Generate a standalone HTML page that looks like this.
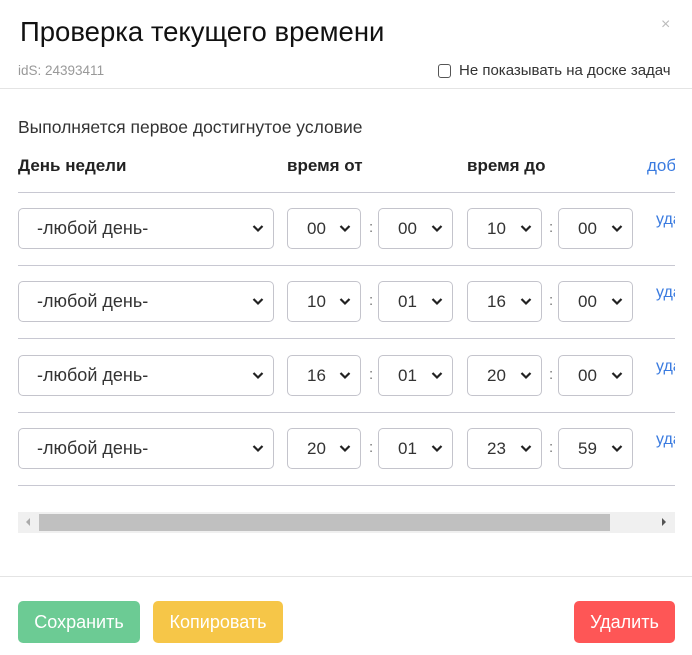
<!DOCTYPE html>
<html><head><meta charset="utf-8"><style>
*{box-sizing:border-box;margin:0;padding:0}
body{width:692px;height:655px;background:#fff;font-family:"Liberation Sans",sans-serif;position:relative;overflow:hidden;color:#222}
.a{position:absolute}
.sel{position:absolute;height:41px;border:1px solid #c4c4cc;border-radius:5px;background:#fff;font-size:17px;color:#333;line-height:39px}
.sel svg{position:absolute;right:9px;top:15px}
.line{position:absolute;left:18px;width:657px;height:1px;background:#c8c8d2}
.btn{position:absolute;top:601px;height:42px;border-radius:5px;color:#fff;font-size:18px;line-height:42px;text-align:center}
.colon{position:absolute;font-size:15px;color:#777}
.clip{position:absolute;left:0;top:0;width:675px;height:655px;overflow:hidden}
.ud{position:absolute;left:656px;color:#3a7be0;font-size:16px}
</style></head><body>
<div class="a" style="left:20px;top:16px;font-size:27.5px;color:#111;white-space:nowrap">Проверка текущего времени</div>
<div class="a" style="left:661px;top:16px;font-size:16px;color:#bbb">×</div>
<div class="a" style="left:18px;top:63px;font-size:13.5px;color:#999">idS: 24393411</div>
<div class="a" style="left:438px;top:64px;width:13px;height:14px;border:1.5px solid #555;border-radius:3px"></div>
<div class="clip"><div class="a" style="left:459px;top:62px;font-size:15px;color:#333;white-space:nowrap">Не показывать на доске задач</div>
<div class="a" style="left:647px;top:156px;font-size:17px;color:#3a7be0;white-space:nowrap">добавить</div>
<div id="uds"></div></div>
<div class="a" style="left:0;top:88px;width:692px;height:1px;background:#e4e4e4"></div>
<div class="a" style="left:18px;top:117px;font-size:17.5px;color:#333;white-space:nowrap">Выполняется первое достигнутое условие</div>
<div class="a" style="left:18px;top:156px;font-size:17px;font-weight:bold">День недели</div>
<div class="a" style="left:287px;top:156px;font-size:17px;font-weight:bold">время от</div>
<div class="a" style="left:467px;top:156px;font-size:17px;font-weight:bold">время до</div>
<div class="line" style="top:192px"></div>
<div id="rows"></div>
<div class="a" style="left:18px;top:512px;width:657px;height:21px;background:#f0f0f0"></div>
<div class="a" style="left:39px;top:514px;width:571px;height:17px;background:#c0c0c0"></div>
<div class="a" style="left:26px;top:518px;width:0;height:0;border-top:4px solid transparent;border-bottom:4px solid transparent;border-right:4px solid #aaa"></div>
<div class="a" style="left:662px;top:518px;width:0;height:0;border-top:4px solid transparent;border-bottom:4px solid transparent;border-left:4px solid #555"></div>
<div class="a" style="left:0;top:576px;width:692px;height:1px;background:#e4e4e4"></div>
<div class="btn" style="left:18px;width:122px;background:#6ccb94">Сохранить</div>
<div class="btn" style="left:153px;width:130px;background:#f6c648">Копировать</div>
<div class="btn" style="left:574px;width:101px;background:#fe5656">Удалить</div>
<script>
var d=[["00","00","10","00"],["10","01","16","00"],["16","01","20","00"],["20","01","23","59"]];
var tops=[208,281,355,428],h="",u="";
var chev='<svg width="12" height="9" viewBox="0 0 12 9"><path d="M1.5 2 L6 6.5 L10.5 2" fill="none" stroke="#222" stroke-width="2.2"/></svg>';
var xs=[[287,361],[378,453],[467,542],[558,633]];
d.forEach(function(r,i){var t=tops[i];
h+='<div class="sel" style="left:18px;top:'+t+'px;width:256px;padding-left:18px;font-size:18px">-любой день-'+chev+'</div>';
r.forEach(function(v,j){h+='<div class="sel" style="left:'+xs[j][0]+'px;top:'+t+'px;width:'+(xs[j][1]-xs[j][0])+'px;padding-left:19px">'+v+chev+'</div>';});
h+='<div class="colon" style="left:369px;top:'+(t+11)+'px">:</div><div class="colon" style="left:549px;top:'+(t+11)+'px">:</div>';
u+='<div class="ud" style="top:'+(t+3)+'px">удалить</div>';
h+='<div class="line" style="top:'+(t+57)+'px"></div>';});
document.getElementById('rows').innerHTML=h;
document.getElementById('uds').innerHTML=u;
</script>
</body></html>
